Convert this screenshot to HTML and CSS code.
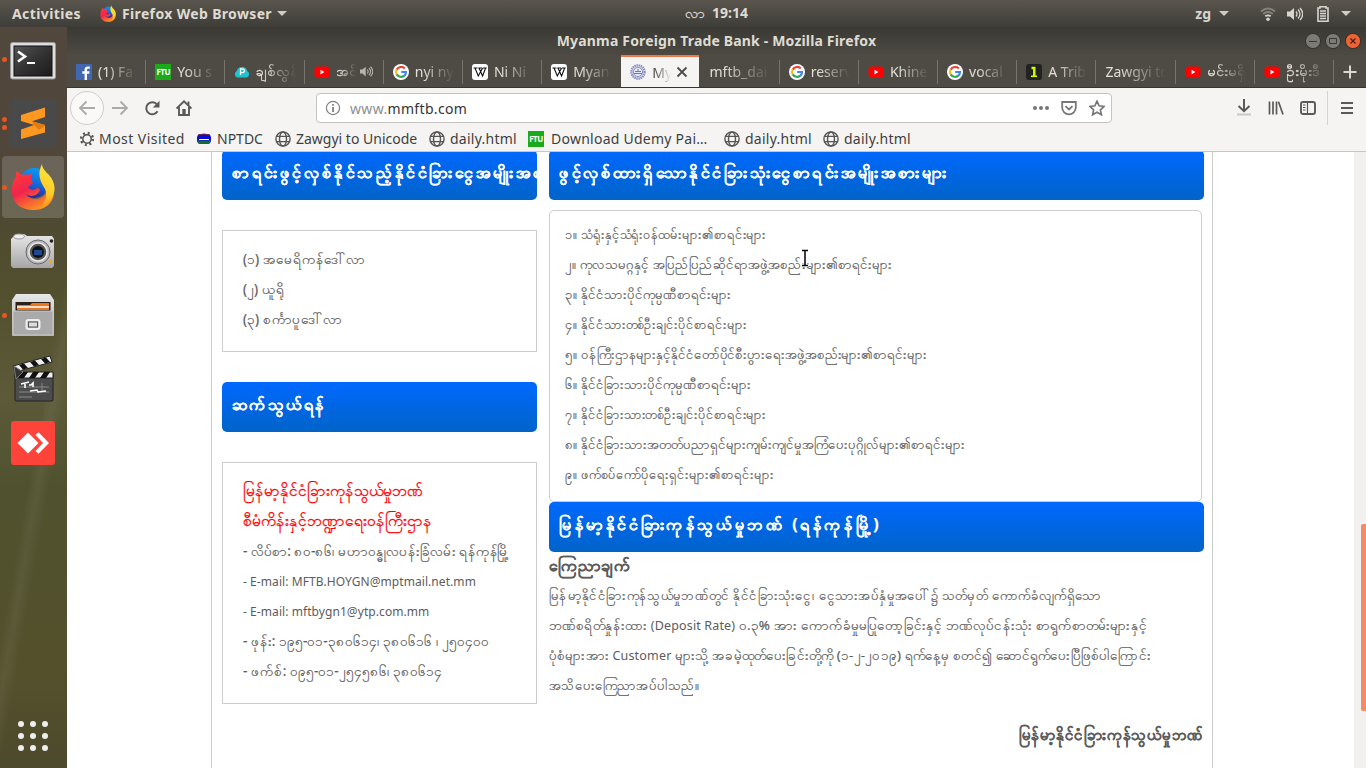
FILE: index.html
```html
<!DOCTYPE html>
<html lang="my">
<head>
<meta charset="utf-8">
<title>Myanma Foreign Trade Bank</title>
<link rel="stylesheet" href="styles.css">
</head>
<body>
<svg class="defs" aria-hidden="true">
  <defs>
    <linearGradient id="fxBody" x1="0.2" y1="0" x2="0.7" y2="1"><stop offset="0" stop-color="#ff3a3a"/><stop offset=".45" stop-color="#f0244c"/><stop offset="1" stop-color="#ff9d1e"/></linearGradient>
    <linearGradient id="fxTail" x1="0.5" y1="0" x2="0.3" y2="1"><stop offset="0" stop-color="#ffe93b"/><stop offset=".6" stop-color="#ffc927"/><stop offset="1" stop-color="#ff8a1c"/></linearGradient>
    <linearGradient id="fxBlue" x1="0.6" y1="0" x2="0.4" y2="1"><stop offset="0" stop-color="#0a9bf5"/><stop offset=".6" stop-color="#1560d4"/><stop offset="1" stop-color="#35208c"/></linearGradient>
    <linearGradient id="metal" x1="0" y1="0" x2="0" y2="1"><stop offset="0" stop-color="#e8e8e8"/><stop offset="1" stop-color="#a5a5a5"/></linearGradient>
    <linearGradient id="dark" x1="0" y1="0" x2="1" y2="1"><stop offset="0" stop-color="#555"/><stop offset=".5" stop-color="#333"/><stop offset="1" stop-color="#1b1b1b"/></linearGradient>
    <symbol id="firefox" viewBox="0 0 44 46">
      <circle cx="23" cy="19" r="15" fill="url(#fxBlue)"/>
      <path d="M5 7l6 4c2-1 4-1 6 0l4-2c0 3-1 5-1 6l2 4-5 4c2 3 6 4 9 1 2 0 3 1 3 2-3 7-10 7-14 4 4 7 15 7 20-1 3-5 2-11 0-15 8 7 8 13 8 16-1 10-10 16-20 16C10 46 1 39 1 27c0-6 1-11 4-14z" fill="url(#fxBody)"/>
      <path d="M31 0c0 4 3 7 7 11 7 8 7 17 2 25-5 6-9 8-14 9 8-5 11-13 8-20-5-8-8-14-3-25z" fill="url(#fxTail)"/>
    </symbol>
    <symbol id="google" viewBox="0 0 16 16"><circle cx="8" cy="8" r="8" fill="#fff"/><path d="M11.8 4.500A5 5 0 0 0 3.700 5.700" stroke="#ea4335" stroke-width="2.200" fill="none"/><path d="M3.700 5.500a5 5 0 0 0 0 5" stroke="#fbbc05" stroke-width="2.200" fill="none"/><path d="M3.700 10.400a5 5 0 0 0 7.600 1.200" stroke="#34a853" stroke-width="2.200" fill="none"/><path d="M11.200 11.800A5 5 0 0 0 13 8H8.200" stroke="#4285f4" stroke-width="2.200" fill="none"/></symbol>
    <symbol id="youtube" viewBox="0 0 16 16"><rect x=".5" y="2.600" width="15" height="11" rx="3" fill="#f00"/><path d="M6.500 5.800v4.600L10.400 8z" fill="#fff"/></symbol>
    <symbol id="wiki" viewBox="0 0 16 16"><rect width="16" height="16" rx="3" fill="#fff"/><path d="M1.500 4h4M6.300 4h3.800M11 4h3.700M3 4l3.300 8L10.600 4M7 4l3.600 8 3-8" stroke="#111" stroke-width="1.100" fill="none"/></symbol>
    <symbol id="globe" viewBox="0 0 16 16"><g fill="none" stroke="#555" stroke-width="1.400"><circle cx="8" cy="8" r="7.100"/><ellipse cx="8" cy="8" rx="3.500" ry="7"/><path d="M1.600 5.400h12.800M1.600 10.600h12.800"/></g></symbol>
    <symbol id="speaker" viewBox="0 0 16 16"><path d="M0 5.500h3L7 2v12L3 10.500H0z" fill="currentColor"/><path d="M9 5.500q2 2.500 0 5M11 3.500q4 4.500 0 9M13 2q5.500 6 0 12" fill="none" stroke="currentColor" stroke-width="1.300"/></symbol>
  </defs>
</svg>

<header class="panel">
  <span class="activities">Activities</span>
  <svg class="fx-small"><use href="#firefox"/></svg>
  <span class="app">Firefox Web Browser</span><i class="caret"></i>
  <span class="clock"><span class="mm">လာ</span>19:14</span>
  <div class="status">
    <span>zg</span><i class="caret"></i>
    <svg class="wifi" width="16" height="16" viewBox="0 0 16 16" fill="none" stroke-width="1.800"><path d="M1 5.500q7-6 14 0M3.200 8q4.800-4 9.600 0" stroke="#85827c"/><path d="M5.300 10.300q2.700-2 5.400 0" stroke="#d8d5cf"/><circle cx="8" cy="13.300" r="1.800" fill="#d8d5cf"/></svg>
    <svg class="vol" width="16" height="16"><use href="#speaker"/></svg>
    <svg class="bat" width="12" height="16" viewBox="0 0 12 16"><path d="M3 2V.8h6V2h2v13.200H1V2z" fill="none" stroke="#d8d5cf" stroke-width="1.600"/><path d="M3 5h6M3 7.500h6M3 10h6M3 12.500h6" stroke="#d8d5cf" stroke-width="1.300"/></svg>
    <i class="caret"></i>
  </div>
</header>

<div class="desktop">
  <nav class="dock">
    <div class="slot run1 low"><svg width="46" height="38" viewBox="0 0 46 38"><rect x=".5" y=".5" width="45" height="36.500" rx="2" fill="#ddd" stroke="#999"/><rect x="4" y="4" width="38" height="30" fill="url(#dark)" stroke="#111"/><path d="M8 9.500l7 5-7 5" fill="none" stroke="#fff" stroke-width="2.600"/><path d="M17 21h8" stroke="#fff" stroke-width="2"/></svg></div>
    <div class="slot run2"><svg width="48" height="48" viewBox="0 0 48 48"><rect width="48" height="48" rx="4" fill="#494949"/><path d="M12 16L36 8.500V18l-13 4.300L36 26v7.500L12 40v-9.500L25 26 12 22z" fill="#ff9820"/><path d="M23 22.300L36 26v1l-6 4-5-5z" fill="#e07c10"/></svg></div>
    <div class="slot run1 on"><svg width="44" height="46"><use href="#firefox"/></svg></div>
    <div class="slot"><svg width="44" height="36" viewBox="0 0 44 36"><path d="M2 4l3-3h8l3 2h25l2 3v27l-2 2H2l-2-2V6z" fill="url(#metal)"/><ellipse cx="8" cy="3.500" rx="5.500" ry="2.500" fill="#eee" stroke="#999"/><circle cx="27" cy="19" r="12" fill="#bbb" stroke="#666"/><circle cx="27" cy="19" r="9" fill="#555" stroke="#e8e8e8" stroke-width="1.500"/><circle cx="27" cy="19" r="6" fill="#111"/><path d="M23 17h8v5h-8z" fill="#1c4a94"/><circle cx="40.500" cy="8" r="1.800" fill="#222"/><path d="M38 27h3v3h-3z" fill="#f5a623"/></svg></div>
    <div class="slot run1"><svg width="42" height="44" viewBox="0 0 42 44"><path d="M4 1h34l4 6v36H0V7z" fill="url(#metal)"/><path d="M3.500 9h35v10h-35z" fill="#2b211b"/><path d="M5 12h13l2-2h17v7H5z" fill="#e87722"/><path d="M5 14h32" stroke="#fff" stroke-width="1.500"/><path d="M1 18h40v24H1z" fill="#aaa" stroke="#c9c9c9"/><rect x="14.500" y="27" width="13" height="9" rx="2" fill="#bbb" stroke="#eee" stroke-width="2"/><rect x="16.500" y="29" width="9" height="5" fill="#ddd" stroke="#555"/></svg></div>
    <div class="slot"><svg width="42" height="48" viewBox="0 0 42 48"><path d="M1 11L38 1l2 6L3 17z" fill="#eee" stroke="#222"/><path d="M7 10l5-1.400 4 4.400-5 1.400zM18 7l5-1.400 4 4.400-5 1.400zM29 4l5-1.400 4 4.400-5 1.400z" fill="#111"/><rect x="3" y="19" width="38" height="27" rx="1" fill="#4c4c4c" stroke="#222"/><path d="M3 17h38v6H3z" fill="#eee" stroke="#222"/><path d="M10 17h6l-4 6H6zM21 17h6l-4 6h-6zM32 17h6l-4 6h-6z" fill="#111"/><path d="M2 11l9 6-7 7z" fill="#333" stroke="#777"/><path d="M7 32h30M7 37h30M7 42h13M30 28v9" stroke="#888"/><path d="M9 29l8-2M13 28v5M17 30h2l2-2v4M18 36l7-1 1 2 8-1" stroke="#fff" stroke-width="1.600" fill="none"/></svg></div>
    <div class="slot"><svg width="44" height="44" viewBox="0 0 44 44"><rect width="44" height="44" rx="3" fill="#fe433a"/><path d="M17 11.500L27.500 22 17 32.500 6.500 22zM24.500 14l3-2.800L38 22 27.500 32.800l-3-2.800 7.500-8z" fill="#fff"/></svg></div>
    <div class="grid9"><i></i><i></i><i></i><i></i><i></i><i></i><i></i><i></i><i></i></div>
  </nav>

  <section class="window">
    <div class="titlebar"><b>Myanma Foreign Trade Bank - Mozilla Firefox</b>
      <div class="wm">
        <svg width="16" height="16" viewBox="0 0 16 16"><circle cx="8" cy="8" r="7.600" fill="#7b7a74" stroke="#33322e"/><path d="M4 8.500h8" stroke="#3a3935"/></svg>
        <svg width="16" height="16" viewBox="0 0 16 16"><circle cx="8" cy="8" r="7.600" fill="#7b7a74" stroke="#33322e"/><path d="M4.500 5.500h7v5h-7z" fill="none" stroke="#3a3935"/></svg>
        <svg width="16" height="16" viewBox="0 0 16 16"><circle cx="8" cy="8" r="7.600" fill="#ee6234" stroke="#33322e"/><path d="M5.500 5.500l5 5M10.500 5.500l-5 5" stroke="#4a2416" stroke-width="1.400"/></svg>
      </div>
    </div>
    <div class="tabs">
      <div class="tab"><svg><path d="M0 0h16v16H0z" fill="#4267b2"/><path d="M11 16V9.800h2.200l.4-2.500H11V6q0-1.200 1.300-1.200h1.500V2.600q-5.200-1-5.200 3v1.700H6.300v2.500h2.300V16z" fill="#fff"/></svg><span>(1) Fa</span></div>
      <div class="tab"><b class="ftu">FTU</b><span>You s</span></div>
      <div class="tab"><svg><path d="M3.500 13.500a3.500 3.500 0 0 1-.8-6.500 5.500 5.500 0 0 1 10.600 0 3.500 3.500 0 0 1-.8 6.500z" fill="#1fc3d0"/><path d="M6.500 11V5h2q2 0 2 1.800t-2 1.800h-2" fill="none" stroke="#fff" stroke-width="1.300"/></svg><span class="my">ချစ်လွန်</span></div>
      <div class="tab sound"><svg><use href="#youtube"/></svg><span class="my">အင်</span><svg class="snd"><use href="#speaker"/></svg></div>
      <div class="tab"><svg><use href="#google"/></svg><span>nyi ny</span></div>
      <div class="tab"><svg><use href="#wiki"/></svg><span>Ni Ni</span></div>
      <div class="tab nosep"><svg><use href="#wiki"/></svg><span>Myan</span></div>
      <div class="tab active"><svg><circle cx="8" cy="8" r="6.600" fill="#e5e7f2" stroke="#8c93c4" stroke-width="2.400" stroke-dasharray="1.500 .6"/><circle cx="8" cy="8" r="4.600" fill="none" stroke="#8c93c4"/><path d="M4 9.500h8M5 7.500h6M7 6h2" stroke="#7079b5" stroke-width="1.200"/></svg><span>My</span><svg class="close"><path d="M3.500 3.500l9 9M12.500 3.500l-9 9" stroke="#4c4c4c" stroke-width="1.800"/></svg></div>
      <div class="tab"><span>mftb_dai</span></div>
      <div class="tab"><svg><use href="#google"/></svg><span>reserv</span></div>
      <div class="tab"><svg><use href="#youtube"/></svg><span>Khine</span></div>
      <div class="tab"><svg><use href="#google"/></svg><span>vocal</span></div>
      <div class="tab"><svg><rect width="16" height="16" rx="3" fill="#222"/><path d="M5.500 4h2.800v8" stroke="#d4ff00" stroke-width="2.400" fill="none"/><path d="M5 12.300h6" stroke="#d4ff00" stroke-width="1.600"/></svg><span>A Trib</span></div>
      <div class="tab"><span>Zawgyi to</span></div>
      <div class="tab"><svg><use href="#youtube"/></svg><span class="my">မင်းမရှိ</span></div>
      <div class="tab"><svg><use href="#youtube"/></svg><span class="my">ဦးမိုးဒီ</span></div>
      <svg class="plus"><path d="M8 1.500v13M1.500 8h13" stroke="#dcd9d3" stroke-width="2"/></svg>
    </div>
    <div class="toolbar">
      <span class="back"><svg width="16" height="16" viewBox="0 0 16 16"><path d="M16 8H1M7.500 1.500L1 8l6.500 6.500" fill="none" stroke="#aaa" stroke-width="1.800"/></svg></span>
      <svg class="fwd" width="16" height="16"><path d="M0 8h15M8.500 1.500L15 8l-6.500 6.500" fill="none" stroke="#aaa" stroke-width="1.800"/></svg>
      <svg class="reload" width="16" height="16"><path d="M13.500 11.200A6 6 0 1 1 12.500 4" fill="none" stroke="#5a5a5a" stroke-width="2"/><path d="M15.500 .8v6.700H8.800z" fill="#5a5a5a"/></svg>
      <svg class="home" width="16" height="16"><path d="M.5 8.500L8 1.300l7.500 7.200M3 7v8h10V7M12.500 1.500v4" fill="none" stroke="#5a5a5a" stroke-width="1.900"/><path d="M6.300 9h3.400v5.500H6.300z" fill="#5a5a5a"/></svg>
      <div class="url">
        <svg width="16" height="16"><circle cx="8" cy="8" r="6.600" fill="none" stroke="#808080" stroke-width="1.200"/><path d="M8 7v5M8 4v1.800" stroke="#808080" stroke-width="1.800"/></svg>
        <span class="addr"><em>www.</em>mmftb.com</span>
        <svg width="16" height="16" fill="#777"><circle cx="2" cy="8" r="2"/><circle cx="8" cy="8" r="2"/><circle cx="14" cy="8" r="2"/></svg>
        <svg width="16" height="16" fill="none" stroke="#777" stroke-width="1.800"><path d="M1.200 2h13.600v5.500a6.800 6.800 0 0 1-13.600 0zM4.500 6.200L8 9.500l3.500-3.300"/></svg>
        <svg width="16" height="16" fill="none" stroke="#777" stroke-width="1.700"><path d="M8 1.200l2.100 4.600 5 .6-3.700 3.400 1 5L8 12.300l-4.400 2.500 1-5L.9 6.400l5-.6z"/></svg>
      </div>
      <div class="right">
        <svg width="16" height="18"><path d="M8 0v12M2.500 7L8 12.200 13.500 7" fill="none" stroke="#5a5a5a" stroke-width="2"/><path d="M1 15.500h14" stroke="#c8c8c8" stroke-width="2"/></svg>
        <svg width="16" height="16" stroke="#5a5a5a" stroke-width="1.700"><path d="M1.500 1.500v13M5 1.500v13M8.500 1.500v13M10.500 1.800L15 14.500"/></svg>
        <svg width="16" height="16" fill="none" stroke="#5a5a5a" stroke-width="1.900"><rect x="1" y="2" width="14" height="12" rx="2"/><path d="M7.500 2v12M3 5h2.500M3 7.500h2.500M3 10h2.500" stroke-width="1.200"/></svg>
        <div class="menu"><svg width="12" height="16" stroke="#5a5a5a" stroke-width="2"><path d="M0 3h12M0 8h12M0 13h12"/></svg></div>
      </div>
    </div>
    <div class="bookmarks">
      <svg width="14" height="16" viewBox="1 0 14 16" fill="none" stroke="#555"><circle cx="8" cy="8" r="4.200" stroke-width="1.500"/><circle cx="8" cy="8" r="6" stroke-width="2.400" stroke-dasharray="2 2.710"/></svg><span class="w1">Most Visited</span>
      <svg width="16" height="16"><rect x="1" y="3" width="14" height="10" rx="4" fill="#0b0bd0"/><path d="M1 9.500h14l-2 3.500H3z" fill="#176b35"/><path d="M3 8.500h10" stroke="#fff"/><path d="M2 4q6-2 12 0" stroke="#7c2a40" fill="none"/></svg><span class="w2">NPTDC</span>
      <svg width="16" height="16"><use href="#globe"/></svg><span class="w3">Zawgyi to Unicode</span>
      <svg width="16" height="16"><use href="#globe"/></svg><span class="w4">daily.html</span>
      <b class="ftu">FTU</b><span class="w5">Download Udemy Pai…</span>
      <svg width="16" height="16"><use href="#globe"/></svg><span class="w6">daily.html</span>
      <svg width="16" height="16"><use href="#globe"/></svg><span class="w7">daily.html</span>
    </div>

    <div class="viewport">
      <main class="page">
        <aside>
          <h2><span>စာရင်းဖွင့်လှစ်နိုင်သည့်နိုင်ငံခြားငွေအမျိုးအစားများ</span></h2>
          <div class="card">
            <p><span>(၁) အမေရိကန်ဒေါ်လာ</span></p>
            <p><span>(၂) ယူရို</span></p>
            <p><span>(၃) စင်္ကာပူဒေါ်လာ</span></p>
          </div>
          <h2 class="contact"><span>ဆက်သွယ်ရန်</span></h2>
          <div class="card">
            <p class="red"><span>မြန်မာ့နိုင်ငံခြားကုန်သွယ်မှုဘဏ်</span></p>
            <p class="red"><span>စီမံကိန်းနှင့်ဘဏ္ဍာရေးဝန်ကြီးဌာန</span></p>
            <p class="address"><span>- လိပ်စာ: ၈၀-၈၆၊ မဟာဝန္ဓုလပန်းခြံလမ်း ရန်ကုန်မြို့</span></p>
            <p class="latin"><span>- E-mail: MFTB.HOYGN@mptmail.net.mm</span></p>
            <p class="latin"><span>- E-mail: mftbygn1@ytp.com.mm</span></p>
            <p><span>- ဖုန်း: ၁၉၅-၀၁-၃၈၀၆၁၄၊ ၃၈၀၆၁၆ ၊ ၂၅၀၄၀၀</span></p>
            <p><span>- ဖက်စ်: ၀၉၅-၀၁-၂၅၄၅၈၆၊ ၃၈၀၆၁၄</span></p>
          </div>
        </aside>
        <article>
          <h2><span>ဖွင့်လှစ်ထားရှိသောနိုင်ငံခြားသုံးငွေစာရင်းအမျိုးအစားများ</span></h2>
          <div class="card accounts">
            <p class="tight"><span>၁။ သံရုံးနှင့်သံရုံးဝန်ထမ်းများ၏စာရင်းများ</span></p>
            <p class="wide"><span>၂။ ကုလသမဂ္ဂနှင့် အပြည်ပြည်ဆိုင်ရာအဖွဲ့အစည်းများ၏စာရင်းများ</span></p>
            <p><span>၃။ နိုင်ငံသားပိုင်ကုမ္ပဏီစာရင်းများ</span></p>
            <p class="tight"><span>၄။ နိုင်ငံသားတစ်ဦးချင်းပိုင်စာရင်းများ</span></p>
            <p class="snug"><span>၅။ ဝန်ကြီးဌာနများနှင့်နိုင်ငံတော်ပိုင်စီးပွားရေးအဖွဲ့အစည်းများ၏စာရင်းများ</span></p>
            <p><span>၆။ နိုင်ငံခြားသားပိုင်ကုမ္ပဏီစာရင်းများ</span></p>
            <p class="tight"><span>၇။ နိုင်ငံခြားသားတစ်ဦးချင်းပိုင်စာရင်းများ</span></p>
            <p><span>၈။ နိုင်ငံခြားသားအတတ်ပညာရှင်များကျမ်းကျင်မှုအကြံပေးပုဂ္ဂိုလ်များ၏စာရင်းများ</span></p>
            <p class="tight"><span>၉။ ဖက်စပ်ကော်ပိုရေးရှင်းများ၏စာရင်းများ</span></p>
          </div>
          <h2><span>မြန်မာ့နိုင်ငံခြားကုန်သွယ်မှုဘဏ် (ရန်ကုန်မြို့)</span></h2>
          <h3><span>ကြေညာချက်</span></h3>
          <p class="l1"><span>မြန်မာ့နိုင်ငံခြားကုန်သွယ်မှုဘဏ်တွင် နိုင်ငံခြားသုံးငွေ၊ ငွေသားအပ်နှံမှုအပေါ်၌ သတ်မှတ် ကောက်ခံလျက်ရှိသော</span></p>
          <p class="l2"><span>ဘဏ်စရိတ်နှုန်းထား <em>(Deposit Rate)</em> ၀.၃% အား ကောက်ခံမှုမပြုတော့ခြင်းနှင့် ဘဏ်လုပ်ငန်းသုံး စာရွက်စာတမ်းများနှင့်</span></p>
          <p class="l3"><span>ပုံစံများအား <em>Customer</em> များသို့ အခမဲ့ထုတ်ပေးခြင်းတို့ကို (၁-၂-၂၀၁၉) ရက်နေ့မှ စတင်၍ ဆောင်ရွက်ပေးပြီဖြစ်ပါကြောင်း</span></p>
          <p class="l4"><span>အသိပေးကြေညာအပ်ပါသည်။</span></p>
          <div class="sign"><span>မြန်မာ့နိုင်ငံခြားကုန်သွယ်မှုဘဏ်</span></div>
        </article>
      </main>
      <div class="scroll"><i></i></div>
    </div>
  </section>
</div>
<svg class="cursor" width="8" height="18" viewBox="0 0 8 18"><path d="M1 1.500h2.500L4 2l.5-.5H7M4 2v14M1 16.500h2.500L4 16l.5.500H7" fill="none" stroke="#fff" stroke-width="3"/><path d="M1 1.500h2.500L4 2l.5-.5H7M4 2v14M1 16.500h2.500L4 16l.5.500H7" fill="none" stroke="#000" stroke-width="1.500"/></svg>
</body>
</html>
```
FILE: styles.css
```css
* { box-sizing: border-box; }
body { margin: 0; width: 1366px; height: 768px; overflow: hidden; background: #fff; font-family: "Noto Sans", "Open Sans", sans-serif; display: flex; flex-direction: column; position: relative; }
p, h2, h3 { margin: 0; }
em { font-style: normal; }
svg { flex: none; display: block; }
.defs { position: absolute; width: 0; height: 0; }

.panel { height: 27px; flex: none; background: linear-gradient(#5a564e, #3e3d38); color: #dfdbd2; font-size: 14px; font-weight: 700; display: flex; align-items: center; padding: 0 15px 0 12px; position: relative; white-space: nowrap; }
.activities { width: 88px; letter-spacing: .4px; }
.app { letter-spacing: .35px; }
.fx-small { width: 16px; height: 17px; margin-right: 6px; }
.caret { border: 5px solid transparent; border-top-color: #cfccc5; border-bottom: 0; margin-left: 5px; }
.clock { position: absolute; left: 685px; top: 3px; }
.clock .mm { margin-right: 7px; font-weight: 400; -webkit-text-stroke: .3px; }
.status { margin-left: auto; display: flex; align-items: center; color: #d8d5cf; }
.status .caret { margin-left: 8px; }
.status .wifi { margin-left: 31px; }
.status .vol { margin-left: 11px; }
.status .bat { margin: 0 5px 0 14px; }
.status .bat + .caret { margin-left: 7px; }

.desktop { display: flex; height: 741px; }
.dock { width: 67px; flex: none; padding: 1px 1px 0 0; background: linear-gradient(100deg, transparent 55%, rgba(255,255,255,.05) 60%, transparent 66%), linear-gradient(#51473c, #50463a 17%, #4e4b31 28%, #54512f 38%, #5c5a38 50%, #50522f 62%, #55502c 88%, #4c4a2c); display: flex; flex-direction: column; align-items: center; gap: 2px; }
.slot { width: 62px; height: 62px; flex: none; border-radius: 4px; display: flex; align-items: center; justify-content: center; position: relative; }
.slot.low { padding-top: 4px; }
.slot.on { background: rgba(255,255,255,.16); }
.run1::before, .run2::before, .run2::after { content: ""; position: absolute; left: 0; top: 29px; width: 5px; height: 5px; border-radius: 50%; background: #e95420; }
.run2::before { top: 25px; }
.run2::after { top: 33px; }
.grid9 { margin-top: auto; margin-bottom: 17px; display: grid; grid-template-columns: repeat(3, 6px); gap: 6px; }
.grid9 i { width: 6px; height: 6px; border-radius: 50%; background: #eee; }

.window { flex: 1; min-width: 0; display: flex; flex-direction: column; }
.titlebar { height: 28px; flex: none; background: linear-gradient(#3a3934, #4c4a43); color: #dfdbd2; font-size: 14px; letter-spacing: .17px; padding-bottom: 2px; display: flex; align-items: center; justify-content: center; position: relative; }
.wm { position: absolute; right: 5px; top: 6px; display: flex; gap: 4px; }
.tabs { height: 33px; flex: none; background: #4e4b44; border-bottom: 1px solid #35342f; display: flex; color: #e2dfd9; font-size: 14px; }
.tab { width: 79.200px; flex: none; height: 33px; padding-left: 9px; display: flex; align-items: center; gap: 6px; position: relative; }
.tab::after { content: ""; position: absolute; right: 0; top: 5px; height: 24px; width: 1px; background: #77746d; }
.tab.nosep::after, .tab.active::after { display: none; }
.tab svg { width: 16px; height: 16px; }
.tab > span { flex: 1; margin-right: 9px; overflow: hidden; white-space: nowrap; -webkit-mask-image: linear-gradient(90deg, #000 20%, transparent); mask-image: linear-gradient(90deg, #000 20%, transparent); }
.tab .my { -webkit-text-stroke: .3px; }
.tab.active { width: 78px; margin-right: 1.200px; height: 32px; background: #f5f4f2; color: #4c4c4c; border-top: 2px solid #f07746; }
.tab .close, .tab .snd { position: absolute; right: 9px; }
.tab.active > span, .tab.sound > span { margin-right: 28px; }
.tab .snd { right: 11px; width: 13px; height: 13px; color: #b8b5ae; }
.plus { width: 16px; height: 16px; margin: 9px 0 0 8px; }
.ftu { width: 16px; height: 16px; flex: none; background: #1aaa1a; color: #fff; font: 700 8px/16px "Open Sans", sans-serif; text-align: center; letter-spacing: -.5px; }

.toolbar { height: 40px; flex: none; background: #f5f4f2; display: flex; align-items: center; padding: 0 13px 0 3px; }
.back { width: 34px; height: 34px; border: 1px solid #cfcdca; border-radius: 50%; background: #faf9f8; display: flex; align-items: center; justify-content: center; }
.fwd { margin-left: 8px; }
.reload, .home { margin-left: 16px; }
.url { margin-left: 124px; width: 796px; height: 30px; background: #fff; border: 1px solid #c6c4c1; border-radius: 4px; display: flex; align-items: center; padding: 0 6px 0 8px; gap: 12px; font-size: 14px; letter-spacing: .33px; color: #333; }
.addr { flex: 1; margin-left: -3px; }
.addr em { color: #8f8f8f; }
.right { margin-left: auto; display: flex; align-items: center; gap: 16px; align-self: stretch; }
.menu { margin-left: -5px; height: 34px; border-left: 1px solid #d5d3d0; padding-left: 13px; display: flex; align-items: center; }
.bookmarks { height: 24px; flex: none; background: #f5f4f2; border-bottom: 1px solid #c9c7c4; display: flex; align-items: center; padding: 0 0 2px 13px; font-size: 14px; color: #3f3f3f; white-space: nowrap; }
.bookmarks span { padding-left: 5px; flex: none; }
.w1 { width: 102px; letter-spacing: .45px; } .w2 { width: 63px; } .w3 { width: 138px; } .w5 { width: 178px; letter-spacing: .25px; }
.w4, .w6, .w7 { width: 83px; letter-spacing: .25px; }
.bookmarks .ftu { margin-right: 2px; }

.viewport { flex: 1; min-height: 0; overflow: hidden; display: flex; background: #fff; }
.page { width: 1002px; height: 620px; flex: none; margin: -2px 0 0 144px; border: solid #ccc; border-width: 0 1px; padding-left: 10px; display: flex; gap: 12px; color: #5c5c5c; font-size: 13px; white-space: nowrap; }
aside { width: 315px; flex: none; display: flex; flex-direction: column; gap: 30px; font-size: 13.500px; }
article { width: 655px; flex: none; }
h2 { height: 50px; border-radius: 5px; background: linear-gradient(#0068ff, #0064c8); color: #fff; font-size: 16px; line-height: 44px; letter-spacing: 2.600px; padding-left: 10px; overflow: hidden; -webkit-text-stroke: .2px; }
.contact { letter-spacing: 1.900px; }
.card { border: 1px solid #ccc; padding: 14px 20px 16px; }
.card p, article p { height: 30px; line-height: 28px; -webkit-text-stroke: .2px; }
.card .red { color: #f00; font-size: 15.600px; line-height: 27px; -webkit-text-stroke: .3px; }
.card .latin { font-size: 12px; line-height: 30px; letter-spacing: .07px; -webkit-text-stroke: 0; }
.address { letter-spacing: -.1px; }
.accounts { width: 653px; margin-top: 10px; border-radius: 5px; padding: 9px 15px 11px; }
.card .tight { letter-spacing: -.1px; font-size: 12.600px; line-height: 29px; }
.snug { letter-spacing: -.12px; }
.wide { font-size: 13.100px; }
.l1 { letter-spacing: .36px; }
.l2 { font-size: 13.400px; letter-spacing: .15px; }
.l3 { font-size: 13.300px; letter-spacing: .19px; }
.l4 { letter-spacing: .25px; }
article p em { font-size: 12.500px; -webkit-text-stroke: 0; }
h3 { height: 29px; font-size: 16px; line-height: 26px; -webkit-text-stroke: .2px; letter-spacing: .2px; }
.sign { margin-top: 20px; width: 655px; text-align: right; font-weight: 700; font-size: 15px; line-height: 27px; letter-spacing: .75px; -webkit-text-stroke: .2px; }
.scroll { margin-left: auto; width: 12px; background: #f2f1f0; padding: 372px 0 0 7px; }
.scroll i { display: block; height: 187px; background: #f28b66; border-radius: 2px 0 0 2px; }
.cursor { position: absolute; left: 801px; top: 249px; }
```
